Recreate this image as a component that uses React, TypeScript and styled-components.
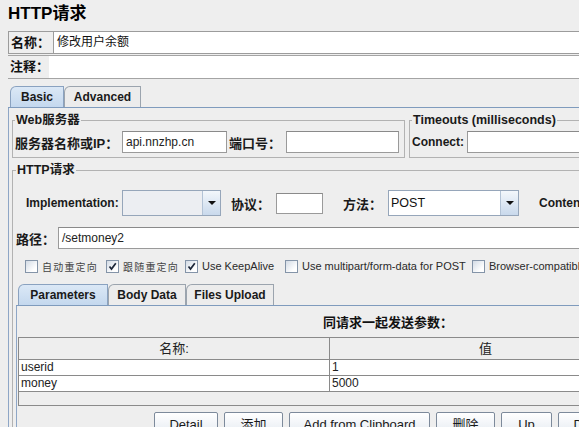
import styled, { createGlobalStyle } from "styled-components";

const GlobalStyle = createGlobalStyle`
  html, body {
    margin: 0;
    padding: 0;
    background: #eeeeee;
    overflow: hidden;
  }
  body {
    font-family: "Liberation Sans", "Noto Sans CJK SC", sans-serif;
    color: #111;
  }
`;

const Viewport = styled.div`
  width: 579px;
  height: 427px;
  overflow: hidden;
`;

/* the form is wider than the window, the right part is clipped */
const Sheet = styled.div`
  width: 764px;
`;

const Title = styled.h1`
  margin: 0;
  padding: 3px 0 0 8px;
  height: 28px;
  box-sizing: border-box;
  font-size: 17px;
  font-weight: bold;
  line-height: 22px;
  color: #000;
`;

const NameRow = styled.div`
  display: flex;
  margin: 3px 0 0 8px;
  height: 23px;
  box-sizing: border-box;
  border: 1px solid #9c9c9c;
  border-right: none;
`;

const CommentRow = styled.div`
  display: flex;
  margin: 1px 0 0 8px;
  height: 24px;
  box-sizing: border-box;
  border-top: 1px solid #a4a4a4;
  border-bottom: 1px solid #a4a4a4;
`;

const RowLabel = styled.div<{ $w: number }>`
  width: ${(p) => p.$w}px;
  flex: none;
  padding-left: 2px;
  box-sizing: border-box;
  white-space: nowrap;
  font-size: 13px;
  font-weight: bold;
  line-height: 21px;
`;

const NameField = styled.div`
  flex: 1;
  background: #fff;
  border-left: 1px solid #9c9c9c;
  padding-left: 3px;
  font-size: 12px;
  line-height: 21px;
`;

const CommentField = styled.div`
  flex: 1;
  background: #fff;
`;

const Tabbed = styled.div<{ $left: number; $top: number }>`
  margin: ${(p) => p.$top}px 0 0 ${(p) => p.$left}px;
`;

const TabStrip = styled.div`
  display: flex;
  height: 21px;
  padding-left: 2px;
  border-bottom: 1px solid #7f9bbd;
`;

const Tab = styled.div<{ $w: number; $active?: boolean }>`
  width: ${(p) => p.$w}px;
  height: 21px;
  box-sizing: border-box;
  border: 1px solid ${(p) => (p.$active ? "#8aa2c0" : "#9ba4ae")};
  border-bottom: none;
  border-top-left-radius: 6px;
  background: ${(p) =>
    p.$active ? "linear-gradient(#dbe8f6, #c4d8ee)" : "#ececec"};
  text-align: center;
  font-size: 12px;
  font-weight: bold;
  line-height: 20px;
  color: #1a1a1a;
`;

const TabBody = styled.div<{ $pad: string }>`
  border-left: 1px solid #8ea6c6;
  padding: ${(p) => p.$pad};
`;

const GroupLine = styled.div`
  display: flex;
  gap: 4px;
`;

const Group = styled.fieldset<{ $w?: number; $pad: string; $top?: number }>`
  margin: ${(p) => p.$top ?? 0}px 0 0 0;
  padding: ${(p) => p.$pad};
  min-width: 0;
  box-sizing: border-box;
  border: 1px solid #b2b2b2;
  ${(p) => (p.$w ? `width: ${p.$w}px; flex: none;` : "flex: 1;")}
`;

const Legend = styled.legend`
  padding: 0 1px;
  margin-left: 0;
  font-size: 12.5px;
  font-weight: bold;
  line-height: 15px;
  color: #1a1a1a;
`;

const FormRow = styled.div<{ $h: number; $indent?: number; $top?: number }>`
  display: flex;
  align-items: center;
  height: ${(p) => p.$h}px;
  margin-top: ${(p) => p.$top ?? 0}px;
  padding-left: ${(p) => p.$indent ?? 0}px;
  white-space: nowrap;
`;

const Label = styled.div<{ $w?: number; $gap?: number; $cjk?: boolean }>`
  ${(p) => (p.$w ? `width: ${p.$w}px; flex: none;` : "")}
  margin-left: ${(p) => p.$gap ?? 0}px;
  font-size: ${(p) => (p.$cjk ? 13 : 12)}px;
  font-weight: bold;
  color: #1a1a1a;
`;

const Field = styled.div<{ $w?: number; $h?: number }>`
  ${(p) => (p.$w ? `width: ${p.$w}px; flex: none;` : "flex: 1;")}
  height: ${(p) => p.$h ?? 22}px;
  box-sizing: border-box;
  background: #fff;
  border: 1px solid #9a9a9a;
  border-top-color: #8a8a8a;
  padding-left: 3px;
  font-size: 12px;
  line-height: ${(p) => (p.$h ?? 22) - 2}px;
  color: #222;
`;

const Combo = styled.div<{ $w: number; $white?: boolean }>`
  display: flex;
  width: ${(p) => p.$w}px;
  height: 26px;
  flex: none;
  box-sizing: border-box;
  border: 1px solid #96a6ba;
  background: ${(p) => (p.$white ? "#fff" : "#eceef2")};
`;

const ComboValue = styled.div`
  flex: 1;
  padding-left: 2px;
  font-size: 12.5px;
  line-height: 24px;
  color: #111;
`;

const ComboArrow = styled.div`
  width: 17px;
  flex: none;
  border-left: 1px solid #b3c3d6;
  background: linear-gradient(#f3f7fb, #c9d9ec);
  display: flex;
  align-items: center;
  justify-content: center;
`;

const Triangle = styled.span`
  width: 0;
  height: 0;
  border-left: 4px solid transparent;
  border-right: 4px solid transparent;
  border-top: 4px solid #111;
`;

const CheckRow = styled.div`
  display: flex;
  align-items: center;
  height: 14px;
  margin-top: 10px;
  padding-left: 9px;
  white-space: nowrap;
`;

const CheckItem = styled.div<{ $w?: number }>`
  display: flex;
  align-items: center;
  gap: 4px;
  ${(p) => (p.$w ? `width: ${p.$w}px; flex: none;` : "")}
`;

const Box = styled.span`
  width: 13px;
  height: 13px;
  box-sizing: border-box;
  border: 1px solid #8494a8;
  background: linear-gradient(135deg, #d3dbe5, #ffffff 75%);
  display: inline-flex;
  align-items: center;
  justify-content: center;
`;

const CheckText = styled.span<{ $cjk?: boolean }>`
  font-size: ${(p) => (p.$cjk ? 10 : 11)}px;
  letter-spacing: ${(p) => (p.$cjk ? 1.2 : 0)}px;
  color: ${(p) => (p.$cjk ? "#444" : "#2a2a2a")};
`;

const PanelTitle = styled.div`
  padding-top: 10px;
  text-align: center;
  font-size: 13px;
  font-weight: bold;
  line-height: 14px;
  color: #111;
`;

const TableBox = styled.div`
  margin: 7px 0 0 1px;
  height: 69px;
  box-sizing: border-box;
  border-top: 1px solid #8a8a8a;
  border-left: 1px solid #8a8a8a;
  border-bottom: 1px solid #8a8a8a;
`;

const TableRow = styled.div<{ $head?: boolean }>`
  display: grid;
  grid-template-columns: 311px 312px 1fr;
  height: ${(p) => (p.$head ? 22 : 16)}px;
  box-sizing: border-box;
  border-bottom: 1px solid #8a8a8a;
  background: ${(p) => (p.$head ? "#eeeeee" : "#ffffff")};
`;

const Cell = styled.div<{ $head?: boolean }>`
  border-right: 1px solid #8a8a8a;
  padding-left: ${(p) => (p.$head ? 0 : 2)}px;
  text-align: ${(p) => (p.$head ? "center" : "left")};
  font-size: ${(p) => (p.$head ? 13 : 12)}px;
  line-height: ${(p) => (p.$head ? 21 : 15)}px;
  color: #222;
  overflow: hidden;
`;

const ButtonBar = styled.div`
  display: flex;
  justify-content: center;
  gap: 6px;
  margin-top: 6px;
`;

const Button = styled.div<{ $w: number }>`
  width: ${(p) => p.$w}px;
  height: 26px;
  box-sizing: border-box;
  border: 1px solid #7d8a9b;
  border-radius: 2px;
  background: linear-gradient(#ffffff, #e2e8f0);
  text-align: center;
  font-size: 13px;
  line-height: 24px;
  color: #1a1a1a;
`;

function Check({ on }: { on?: boolean }) {
  return (
    <Box>
      {on && (
        <svg width="9" height="9" viewBox="0 0 9 9">
          <path
            d="M1.5 4.5 L3.5 7 L7.8 1.2"
            fill="none"
            stroke="#1c2638"
            strokeWidth="1.7"
          />
        </svg>
      )}
    </Box>
  );
}

function ComboBox({ w, value, white }: { w: number; value?: string; white?: boolean }) {
  return (
    <Combo $w={w} $white={white}>
      <ComboValue>{value}</ComboValue>
      <ComboArrow>
        <Triangle />
      </ComboArrow>
    </Combo>
  );
}

const options = [
  { text: "自动重定向", cjk: true, on: false, w: 81 },
  { text: "跟随重定向", cjk: true, on: true, w: 79 },
  { text: "Use KeepAlive", cjk: false, on: true, w: 100 },
  { text: "Use multipart/form-data for POST", cjk: false, on: false, w: 187 },
  { text: "Browser-compatible headers", cjk: false, on: false, w: 0 },
];

const params = [
  { name: "userid", value: "1" },
  { name: "money", value: "5000" },
];

const buttons = [
  { label: "Detail", w: 64 },
  { label: "添加", w: 59 },
  { label: "Add from Clipboard", w: 141 },
  { label: "删除", w: 59 },
  { label: "Up", w: 51 },
  { label: "Down", w: 64 },
];

export default function App() {
  return (
    <>
      <GlobalStyle />
      <Viewport>
        <Sheet>
          <Title>HTTP请求</Title>
          <NameRow>
            <RowLabel $w={44}>名称：</RowLabel>
            <NameField>修改用户余额</NameField>
          </NameRow>
          <CommentRow>
            <RowLabel $w={41}>注释：</RowLabel>
            <CommentField />
          </CommentRow>

          <Tabbed $left={8} $top={7}>
            <TabStrip>
              <Tab $w={54} $active>
                Basic
              </Tab>
              <Tab $w={77}>Advanced</Tab>
            </TabStrip>
            <TabBody $pad="5px 0 0 3px">
              <GroupLine>
                <Group $w={393} $pad="3px 0 4px 2px">
                  <Legend>Web服务器</Legend>
                  <FormRow $h={22}>
                    <Label $w={107} $cjk>
                      服务器名称或IP：
                    </Label>
                    <Field $w={105}>api.nnzhp.cn</Field>
                    <Label $w={57} $gap={2} $cjk>
                      端口号：
                    </Label>
                    <Field $w={113} />
                  </FormRow>
                </Group>
                <Group $pad="3px 0 4px 2px">
                  <Legend>Timeouts (milliseconds)</Legend>
                  <FormRow $h={22}>
                    <Label $w={55}>Connect:</Label>
                    <Field $w={200} />
                  </FormRow>
                </Group>
              </GroupLine>

              <Group $pad="12px 4px 0 3px" $top={5}>
                <Legend>HTTP请求</Legend>
                <FormRow $h={26} $indent={10}>
                  <Label $w={96}>Implementation:</Label>
                  <ComboBox w={99} />
                  <Label $w={45} $gap={10} $cjk>
                    协议：
                  </Label>
                  <Field $w={47} $h={21} />
                  <Label $w={45} $gap={20} $cjk>
                    方法：
                  </Label>
                  <ComboBox w={131} value="POST" white />
                  <Label $gap={20}>Content encoding:</Label>
                </FormRow>
                <FormRow $h={22} $top={11}>
                  <Label $w={42} $cjk>
                    路径：
                  </Label>
                  <Field>/setmoney2</Field>
                </FormRow>
                <CheckRow>
                  {options.map((o) => (
                    <CheckItem key={o.text} $w={o.w || undefined}>
                      <Check on={o.on} />
                      <CheckText $cjk={o.cjk}>{o.text}</CheckText>
                    </CheckItem>
                  ))}
                </CheckRow>

                <Tabbed $left={0} $top={11}>
                  <TabStrip>
                    <Tab $w={90} $active>
                      Parameters
                    </Tab>
                    <Tab $w={78}>Body Data</Tab>
                    <Tab $w={88}>Files Upload</Tab>
                  </TabStrip>
                  <TabBody $pad="0">
                    <PanelTitle>同请求一起发送参数：</PanelTitle>
                    <TableBox>
                      <TableRow $head>
                        <Cell $head>名称:</Cell>
                        <Cell $head>值</Cell>
                        <Cell $head>编码?</Cell>
                      </TableRow>
                      {params.map((r) => (
                        <TableRow key={r.name}>
                          <Cell>{r.name}</Cell>
                          <Cell>{r.value}</Cell>
                          <Cell />
                        </TableRow>
                      ))}
                    </TableBox>
                    <ButtonBar>
                      {buttons.map((b) => (
                        <Button key={b.label} $w={b.w}>
                          {b.label}
                        </Button>
                      ))}
                    </ButtonBar>
                  </TabBody>
                </Tabbed>
              </Group>
            </TabBody>
          </Tabbed>
        </Sheet>
      </Viewport>
    </>
  );
}
